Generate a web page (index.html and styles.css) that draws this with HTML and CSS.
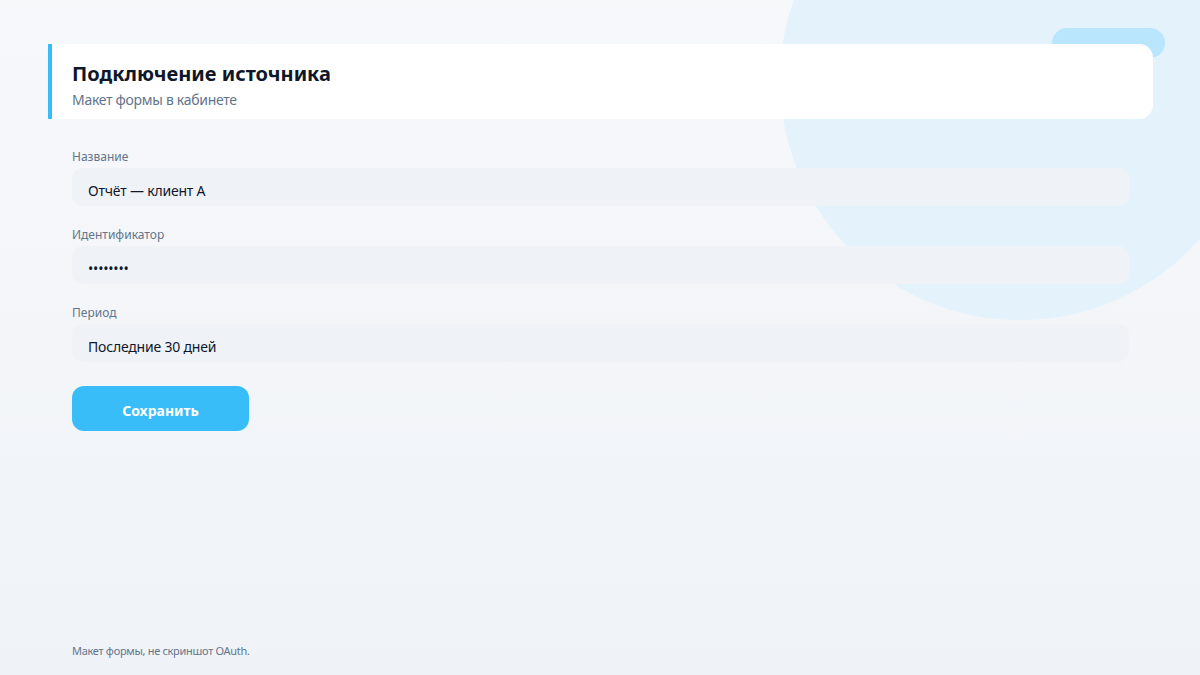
FILE: index.html
```html
<!DOCTYPE html>
<html lang="ru">
<head>
    <meta charset="UTF-8">
    <meta name="viewport" content="width=device-width, initial-scale=1.0">
    <title>Подключение источника</title>
    <link rel="stylesheet" href="styles.css">
</head>
<body>
    <div class="page">
        <div class="glow"></div>
        <span class="badge">сохранено</span>

        <div class="header-card">
            <h1>Подключение источника</h1>
            <p>Макет формы в кабинете</p>
        </div>

        <form class="form" onsubmit="return false">
            <div class="field">
                <label for="name">Название</label>
                <input type="text" id="name" value="Отчёт — клиент A" readonly>
            </div>
            <div class="field">
                <label for="ident">Идентификатор</label>
                <input type="password" id="ident" value="abcdefgh" readonly>
            </div>
            <div class="field">
                <label for="period">Период</label>
                <input type="text" id="period" value="Последние 30 дней" readonly>
            </div>
            <button type="button" class="save">Сохранить</button>
        </form>

        <p class="footnote">Макет формы, не скриншот OAuth.</p>
    </div>
</body>
</html>
```

FILE: styles.css
```css
/* Page frame */
body {
    margin: 0;
    font-family: 'Noto Sans', 'Open Sans', 'DejaVu Sans', sans-serif;
    color: #0f172a;
    background: linear-gradient(180deg, #f7f8fa 0%, #eff3f8 100%);
}
.page {
    position: relative;
    overflow: hidden;
    box-sizing: border-box;
    min-height: 100vh;
    height: 675px;
    display: flex;
    flex-direction: column;
    padding: 44px 47px 0 48px;
}
.glow { /* soft blue circle in the top right corner */
    position: absolute;
    top: -160px;
    right: -60px;
    width: 480px;
    height: 480px;
    border-radius: 50%;
    background: #e3f2fb;
}
.badge {
    position: absolute;
    top: 28px;
    right: 35px;
    box-sizing: border-box;
    width: 113px;
    height: 30px;
    padding: 8px 18px 0;
    border-radius: 15px;
    background: #bae6fd;
    font-size: 13px;
    font-weight: 700;
    line-height: 20px;
    color: #0f172a;
    overflow: hidden;
}

/* Header card */
.header-card {
    position: relative;
    z-index: 1;
    background: #ffffff;
    border-left: 4px solid #38bdf8;
    border-radius: 0 14px 14px 0;
    padding: 17px 20px 9px;
}
.header-card h1 {
    margin: 0;
    font-size: 20px;
    line-height: 26px;
    font-weight: 700;
    color: #0f172a;
}
.header-card p {
    margin: 3px 0 0;
    font-size: 14px;
    line-height: 20px;
    letter-spacing: -0.3px;
    color: #64748b;
}

/* Form */
.form {
    position: relative;
    display: flex;
    flex-direction: column;
    gap: 21px;
    padding: 30px 24px 0;
}
.field {
    display: flex;
    flex-direction: column;
}
.field label {
    font-size: 12px;
    line-height: 16px;
    color: #64748b;
    margin-bottom: 3px;
}
.field input {
    box-sizing: border-box;
    width: 100%;
    height: 38px;
    padding: 7px 16px 0;
    border: none;
    border-radius: 10px;
    background: #eff3f8;
    font-family: inherit;
    font-size: 14px;
    letter-spacing: -0.2px;
    color: #0f172a;
    outline: none;
}
.save {
    align-self: flex-start;
    margin-top: 3px;
    width: 177px;
    height: 45px;
    padding-top: 5px;
    border: none;
    border-radius: 12px;
    background: #38bdf8;
    color: #ffffff;
    font-family: inherit;
    font-size: 14px;
    font-weight: 700;
    cursor: pointer;
}

.footnote {
    position: relative;
    margin: auto 0 0;
    padding: 0 24px 16px;
    font-size: 11px;
    line-height: 16px;
    letter-spacing: -0.3px;
    color: #64748b;
}
```
